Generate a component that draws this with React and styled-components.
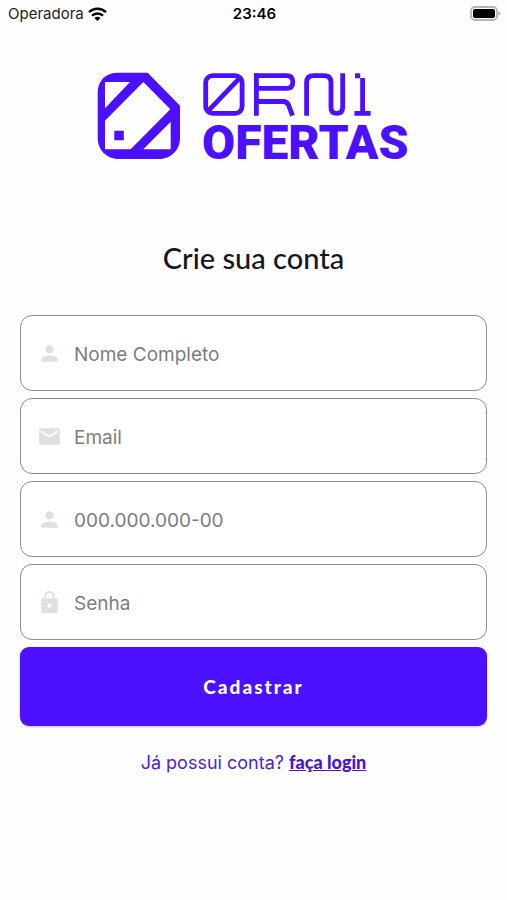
import React, { useState } from 'react';
import styled, { createGlobalStyle } from 'styled-components';
import { MdPerson, MdEmail, MdLock } from 'react-icons/md';

const GlobalStyle = createGlobalStyle`
  * {
    box-sizing: border-box;
  }

  body {
    margin: 0;
    background: #fefefe;
    font-family: Inter, 'Liberation Sans', sans-serif;
  }
`;

const StatusBar = styled.header`
  display: grid;
  grid-template-columns: 1fr auto 1fr;
  align-items: center;
  height: 27px;
  padding: 0 6px 0 8px;
  font-size: 15px;
  color: #222;
`;

const Carrier = styled.div`
  display: flex;
  align-items: center;
  gap: 4px;
`;

const Clock = styled.time`
  font-weight: 600;
  color: #000;
`;

const Battery = styled.svg`
  justify-self: end;
`;

const Page = styled.main`
  display: flex;
  flex-direction: column;
  align-items: center;
  padding: 45px 20px 32px;
`;

const LogoSvg = styled.svg`
  display: block;
  max-width: 100%;
  color: #4a10ff;

  text {
    font-family: Roboto, 'Liberation Sans', sans-serif;
    font-size: 48px;
    font-weight: 900;
  }
`;

const Title = styled.h1`
  margin: 62px 0 37px;
  font-family: Lato, 'Open Sans', sans-serif;
  font-size: 29px;
  font-weight: 500;
  line-height: 40px;
  color: #14171f;
`;

const Form = styled.form`
  display: flex;
  flex-direction: column;
  gap: 7px;
  width: 100%;
`;

const Field = styled.label`
  display: flex;
  align-items: center;
  gap: 12px;
  height: 76px;
  padding: 0 16px;
  border: 1px solid #8e8e8e;
  border-radius: 12px;
  background: #fff;

  svg {
    flex: none;
    color: #dfe1e1;
  }
`;

const Input = styled.input`
  flex: 1;
  min-width: 0;
  padding: 3px 0 0;
  border: none;
  outline: none;
  background: transparent;
  font-family: inherit;
  font-size: 19px;
  color: #222;

  &::placeholder {
    color: #7d7d7d;
    opacity: 1;
  }
`;

const SubmitButton = styled.button`
  height: 79px;
  border: none;
  border-radius: 9px;
  background: #4a10ff;
  box-shadow: 0 1px 2px rgba(0, 0, 0, 0.25);
  font-family: Lato, 'Open Sans', sans-serif;
  font-size: 19px;
  font-weight: 900;
  letter-spacing: 2px;
  color: #fff;
  cursor: pointer;
`;

const LoginText = styled.p`
  margin: 24px 0 0;
  font-size: 18px;
  line-height: 24px;
  color: #4a24dc;
`;

const LoginLink = styled.a`
  font-family: Lato, 'Open Sans', sans-serif;
  font-weight: 900;
  color: #4314dc;
`;

const fields = [
  { name: 'nome', label: 'Nome Completo', type: 'text', icon: MdPerson },
  { name: 'email', label: 'Email', type: 'email', icon: MdEmail },
  { name: 'cpf', label: '000.000.000-00', type: 'text', icon: MdPerson },
  { name: 'senha', label: 'Senha', type: 'password', icon: MdLock },
];

const WifiIcon = () => (
  <svg width="19" height="14" viewBox="0 0 19 14" aria-hidden="true">
    <g fill="none" stroke="#000" strokeWidth="2.5">
      <path d="M1 5.2C5.7.6 13.3.6 18 5.2" />
      <path d="M4 8.6C7 5.7 12 5.7 15 8.6" />
    </g>
    <path d="M6.4 10.9C8.2 9.3 10.8 9.3 12.6 10.9L9.5 14z" fill="#000" />
  </svg>
);

const Logo = () => (
  <LogoSvg width="315" height="104" viewBox="-1 0 315 104" role="img" aria-label="Orni Ofertas">
    {/* casa */}
    <path
      fill="currentColor"
      fillRule="evenodd"
      d="M20.7.8H50.7L83 33.7V66C83 78 74 87 62 87H21.7C9.7 87 .7 78 .7 66V20.8C.7 8.8 8.7.8 20.7.8Z
        M8 10V36.3L33 10Z
        M46.3 10L8 48.7V77.3H33.7L73.3 37.3Z
        M73.7 49.7L46.3 77.3H73.7Z
        M17.3 58.7V68.2H26.8V58.7Z"
    />
    {/* ORNI */}
    <g fill="none" stroke="currentColor" strokeWidth="4.8">
      <rect x="108.7" y="3.6" width="36.4" height="37.8" rx="7" />
      <path d="M110.5 39.6L143.3 5.4" />
      <path d="M157 3.6H189.5Q195.8 3.6 195.8 10T189.5 16.4H159.4" />
      <path d="M159.4 1.3V43.7" />
      <path d="M159.4 29.5H186Q190 29.5 191.5 33L195.5 43.7" />
      <path d="M209.6 43.7V10.6Q209.6 3.6 216.6 3.6H227Q234 3.6 234 10.6V35.4Q234 41.4 239.8 41.4T245.7 35.4V1.3" />
      <path d="M265.6 6V41.4M257.4 41.4H273.6" />
    </g>
    <path d="M258 1.3H263.2V6.2H258Z" fill="currentColor" />
    <text x="105" y="87" fill="currentColor">OFERTAS</text>
  </LogoSvg>
);

const App = () => {
  const [values, setValues] = useState({ nome: '', email: '', cpf: '', senha: '' });

  const handleChange = (event) => {
    setValues({ ...values, [event.target.name]: event.target.value });
  };

  const handleSubmit = (event) => {
    event.preventDefault();
  };

  return (
    <>
      <GlobalStyle />
      <StatusBar>
        <Carrier>
          Operadora
          <WifiIcon />
        </Carrier>
        <Clock>23:46</Clock>
        <Battery width="31" height="15" viewBox="0 0 31 15" aria-hidden="true">
          <rect x="1" y="1" width="26" height="13" rx="4" fill="#fff" stroke="#b5b5b5" strokeWidth="1.8" />
          <rect x="3" y="3" width="22" height="9" rx="2" fill="#000" />
          <path d="M28.3 5.2Q30.6 6 30.6 7.5T28.3 9.8Z" fill="#b5b5b5" />
        </Battery>
      </StatusBar>

      <Page>
        <Logo />
        <Title>Crie sua conta</Title>

        <Form onSubmit={handleSubmit}>
          {fields.map(({ name, label, type, icon: Icon }) => (
            <Field key={name}>
              <Icon size={25} aria-hidden="true" />
              <Input
                name={name}
                type={type}
                placeholder={label}
                aria-label={label}
                value={values[name]}
                onChange={handleChange}
              />
            </Field>
          ))}
          <SubmitButton type="submit">Cadastrar</SubmitButton>
        </Form>

        <LoginText>
          Já possui conta? <LoginLink href="#login">faça login</LoginLink>
        </LoginText>
      </Page>
    </>
  );
};

export default App;
